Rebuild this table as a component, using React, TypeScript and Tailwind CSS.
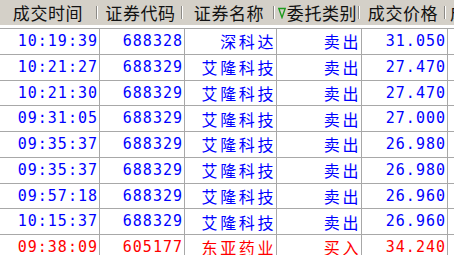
const trades = [
  { time: '10:19:39', code: '688328', name: '深科达', side: '卖出', price: '31.050' },
  { time: '10:21:27', code: '688329', name: '艾隆科技', side: '卖出', price: '27.470' },
  { time: '10:21:30', code: '688329', name: '艾隆科技', side: '卖出', price: '27.470' },
  { time: '09:31:05', code: '688329', name: '艾隆科技', side: '卖出', price: '27.000' },
  { time: '09:35:37', code: '688329', name: '艾隆科技', side: '卖出', price: '26.980' },
  { time: '09:35:37', code: '688329', name: '艾隆科技', side: '卖出', price: '26.980' },
  { time: '09:57:18', code: '688329', name: '艾隆科技', side: '卖出', price: '26.960' },
  { time: '10:15:37', code: '688329', name: '艾隆科技', side: '卖出', price: '26.960' },
  { time: '09:38:09', code: '605177', name: '东亚药业', side: '买入', price: '34.240' },
];

const cols = 'grid grid-cols-[100px_85px_92px_85px_86px_1fr]';
const cjk = { fontFamily: '"Noto Sans CJK SC", "Noto Sans", sans-serif' };
const mono = { fontFamily: '"DejaVu Sans Mono", "Liberation Mono", monospace' };

function SortMark() {
  return (
    <svg width="8" height="12" viewBox="0 0 8 12" className="mr-[1px] shrink-0">
      <path d="M0.8 1.5 H7.2 L4 10.5 Z" fill="none" stroke="#1f9a1f" strokeWidth="1.4" />
    </svg>
  );
}

function HeadCell({ label, sorted, last }: { label: string; sorted?: boolean; last?: boolean }) {
  return (
    <div className="flex items-center h-full overflow-hidden">
      <div className={`flex items-center ${last ? 'pl-[2px]' : 'flex-1 justify-center'}`}>
        {sorted && <SortMark />}
        <span className="whitespace-nowrap text-[17px] tracking-[0.6px] text-[#111]">{label}</span>
      </div>
      {!last && <span className="w-[2px] h-[13px] border-l border-[#8c8a86] bg-white mr-[2px] shrink-0" />}
    </div>
  );
}

export default function App() {
  return (
    <div className="w-[454px] h-[255px] overflow-hidden bg-white select-none" style={cjk}>
      <div className={`${cols} h-[25px] bg-[#d4d0c8]`}>
        <HeadCell label="成交时间" />
        <HeadCell label="证券代码" />
        <HeadCell label="证券名称" />
        <HeadCell label="委托类别" sorted />
        <HeadCell label="成交价格" />
        <HeadCell label="成交数量" last />
      </div>

      <div className="mt-[3px] border-t border-[#a8a8a8]">
        {trades.map((t, i) => {
          const color = t.side === '买入' ? 'text-[#ff0000]' : 'text-[#0000ff]';
          const cell = `h-[25.75px] border-r border-b border-[#a8a8a8] flex items-center justify-end ${color}`;
          return (
            <div key={i} className={cols}>
              <div className={`${cell} text-[15px] tracking-[1px] pr-[1px]`} style={mono}>{t.time}</div>
              <div className={`${cell} text-[15px] tracking-[1px] pr-[1px]`} style={mono}>{t.code}</div>
              <div className={`${cell} text-[16px] tracking-[2.6px]`}>{t.name}</div>
              <div className={`${cell} text-[16px] tracking-[2.6px]`}>{t.side}</div>
              <div className={`${cell} text-[15px] tracking-[1px] pr-[1px]`} style={mono}>{t.price}</div>
              <div className="h-[25.75px] border-b border-[#a8a8a8]" />
            </div>
          );
        })}
      </div>
    </div>
  );
}
